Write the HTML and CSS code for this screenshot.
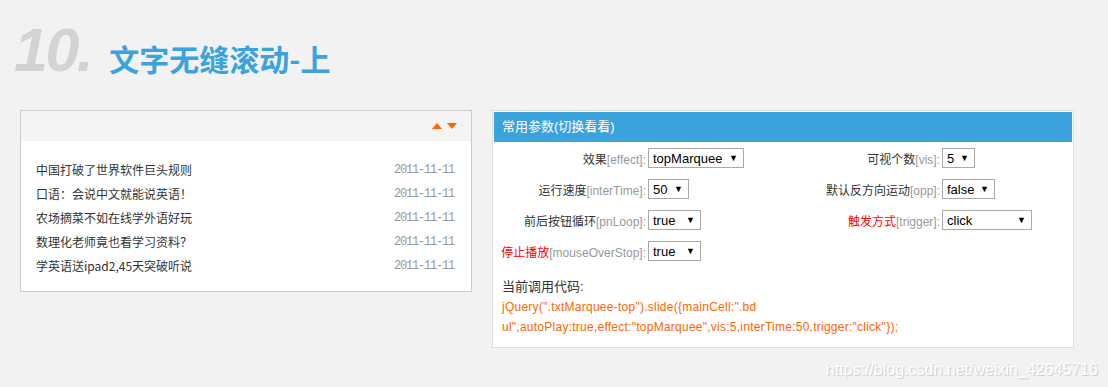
FILE: index.html
```html
<!DOCTYPE html>
<html lang="zh-CN">
<head>
    <meta charset="UTF-8">
    <title>文字无缝滚动-上</title>
    <link rel="stylesheet" href="styles.css">
</head>
<body>
    <h2 class="title"><span class="num">10.</span><span class="name">文字无缝滚动-上</span></h2>

    <div class="demo">
        <!-- marquee box -->
        <div class="txtMarquee-top">
            <div class="hd">
                <a class="prev"></a>
                <a class="next"></a>
            </div>
            <ul class="bd">
                <li><a>中国打破了世界软件巨头规则</a><span class="date">2011-11-11</span></li>
                <li><a>口语：会说中文就能说英语！</a><span class="date">2011-11-11</span></li>
                <li><a>农场摘菜不如在线学外语好玩</a><span class="date">2011-11-11</span></li>
                <li><a>数理化老师竟也看学习资料？</a><span class="date">2011-11-11</span></li>
                <li><a>学英语送ipad2,45天突破听说</a><span class="date">2011-11-11</span></li>
            </ul>
        </div>

        <!-- params box -->
        <div class="params">
            <h3>常用参数(切换看看)</h3>
            <div class="opts">
                <label>效果<em>[effect]:</em></label>
                <div class="sel w-effect"><select><option>topMarquee</option><option>leftMarquee</option></select></div>
                <label>可视个数<em>[vis]:</em></label>
                <div class="sel w-vis"><select><option>5</option><option>4</option></select></div>

                <label>运行速度<em>[interTime]:</em></label>
                <div class="sel w-time"><select><option>50</option><option>100</option></select></div>
                <label>默认反方向运动<em>[opp]:</em></label>
                <div class="sel w-opp"><select><option>false</option><option>true</option></select></div>

                <label>前后按钮循环<em>[pnLoop]:</em></label>
                <div class="sel w-bool"><select><option>true</option><option>false</option></select></div>
                <label><span class="red">触发方式</span><em>[trigger]:</em></label>
                <div class="sel w-trigger"><select><option>click</option><option>mouseover</option></select></div>

                <label><span class="red">停止播放</span><em>[mouseOverStop]:</em></label>
                <div class="sel w-bool"><select><option>true</option><option>false</option></select></div>
            </div>
            <p class="code-title">当前调用代码:</p>
            <p class="code">jQuery(".txtMarquee-top").slide({mainCell:".bd ul",autoPlay:true,effect:"topMarquee",vis:5,interTime:50,trigger:"click"});</p>
        </div>
    </div>

    <div class="watermark">https://blog.csdn.net/weixin_42645716</div>
</body>
</html>
```

FILE: styles.css
```css
html, * {
    box-sizing: border-box;
    margin: 0;
    padding: 0;
}

body {
    position: relative;
    height: 387px;
    background: #f2f2f2;
    font-family: "Liberation Sans", "Noto Sans CJK SC", sans-serif;
    font-size: 12px;
    color: #333;
    overflow: hidden;
}

/* title */
.title {
    display: flex;
    align-items: baseline;
    height: 110px;
    padding: 20px 0 0 14px;
    font-weight: bold;
}

.title .num {
    font-size: 61px;
    line-height: 60px;
    font-style: italic;
    letter-spacing: -2.5px;
    color: #d3d3d3;
}

.title .name {
    margin-left: 18px;
    font-family: "Noto Sans CJK SC", sans-serif;
    font-size: 30px;
    color: #3aa2dd;
}

.demo {
    display: flex;
    align-items: flex-start;
    gap: 20px;
    padding-left: 20px;
}

/* marquee */
.txtMarquee-top {
    width: 452px;
    height: 182px;
    border: 1px solid #cccccc;
    background: #fff;
}

.txtMarquee-top .hd {
    display: flex;
    justify-content: flex-end;
    align-items: center;
    gap: 5px;
    height: 30px;
    padding-right: 14px;
    background: #f4f4f4;
}

.hd a {
    width: 0;
    height: 0;
    border-left: 5px solid transparent;
    border-right: 5px solid transparent;
}

.hd .prev {
    border-bottom: 6px solid #ff6600;
}

.hd .next {
    border-top: 6px solid #ff6600;
}

.bd {
    list-style: none;
    padding: 17px 15px 0 15px;
}

.bd li {
    display: flex;
    justify-content: space-between;
    height: 24px;
    line-height: 24px;
    font-family: "Noto Sans CJK SC", sans-serif;
    font-size: 12px;
}

.bd li a {
    color: #333;
}

.bd .date {
    margin-right: 2px;
    font-family: "Liberation Mono", monospace;
    font-size: 12px;
    letter-spacing: -1.2px;
    color: #999;
}

/* params */
.params {
    width: 582px;
    height: 238px;
    border: 1px solid #dddddd;
    padding: 1px;
    background: #fff;
}

.params h3 {
    height: 30px;
    line-height: 30px;
    padding-left: 8px;
    background: #3aa3dc;
    color: #fff;
    font-size: 13px;
    font-weight: normal;
}

.opts {
    display: grid;
    grid-template-columns: 154px 140px 154px 1fr;
    grid-auto-rows: 20px;
    row-gap: 11px;
    align-items: center;
    padding-top: 6px;
}

.opts label {
    text-align: right;
    padding-right: 2px;
    white-space: nowrap;
    color: #333;
}

.opts em {
    font-style: normal;
    color: #999;
}

.red {
    color: #ff0000;
}

.sel {
    position: relative;
    height: 20px;
}

.sel select {
    appearance: none;
    -webkit-appearance: none;
    width: 100%;
    height: 20px;
    padding: 0 0 0 4px;
    border: 1px solid #a9a9a9;
    border-radius: 0;
    background: #fff;
    font-family: "Liberation Sans", sans-serif;
    font-size: 13px;
    color: #000;
}

.sel::after {
    content: "\25BC";
    position: absolute;
    right: 6px;
    top: 4px;
    font-size: 9px;
    line-height: 12px;
    color: #000;
    pointer-events: none;
}

.w-effect { width: 96px; }
.w-vis { width: 33px; }
.w-time { width: 41px; }
.w-opp { width: 53px; }
.w-bool { width: 53px; }
.w-trigger { width: 90px; }

.code-title {
    margin-top: 16px;
    padding-left: 8px;
    line-height: 20px;
    font-size: 13px;
    color: #333;
}

.code {
    width: 560px;
    padding-left: 8px;
    line-height: 20px;
    font-size: 12px;
    letter-spacing: 0.25px;
    color: #ff6600;
}

.watermark {
    position: absolute;
    right: 10px;
    bottom: 8px;
    font-size: 16px;
    color: #ffffff;
    text-shadow: 1px 1px 1px rgba(0, 0, 0, 0.18);
}
```
